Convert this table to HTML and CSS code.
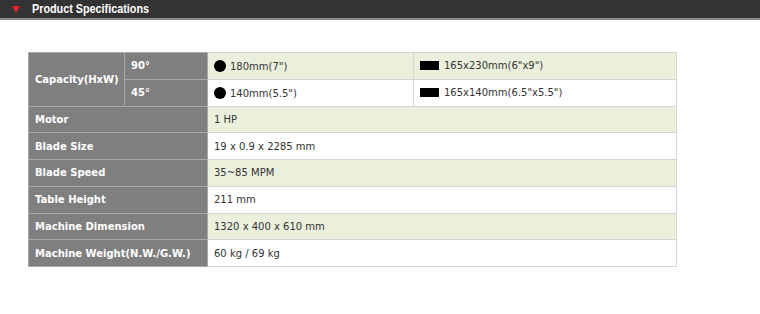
FILE: index.html
```html
<!DOCTYPE html>
<html>
<head>
<meta charset="utf-8">
<link rel="stylesheet" href="styles.css">
</head>
<body>
<div class="bar">
  <span class="tri"></span>
  <span class="bar-title">Product Specifications</span>
</div>
<div class="content">
<table class="spec">
  <colgroup>
    <col class="c1"><col class="c2"><col class="c3"><col class="c4">
  </colgroup>
  <tr class="alt">
    <th rowspan="2">Capacity(HxW)</th>
    <th>90°</th>
    <td><span class="dot"></span>180mm(7")</td>
    <td><span class="rect"></span>165x230mm(6"x9")</td>
  </tr>
  <tr>
    <th>45°</th>
    <td><span class="dot"></span>140mm(5.5")</td>
    <td><span class="rect"></span>165x140mm(6.5"x5.5")</td>
  </tr>
  <tr class="alt"><th colspan="2">Motor</th><td colspan="2">1 HP</td></tr>
  <tr><th colspan="2">Blade Size</th><td colspan="2">19 x 0.9 x 2285 mm</td></tr>
  <tr class="alt"><th colspan="2">Blade Speed</th><td colspan="2">35~85 MPM</td></tr>
  <tr><th colspan="2">Table Height</th><td colspan="2">211 mm</td></tr>
  <tr class="alt"><th colspan="2">Machine Dimension</th><td colspan="2">1320 x 400 x 610 mm</td></tr>
  <tr><th colspan="2">Machine Weight(N.W./G.W.)</th><td colspan="2">60 kg / 69 kg</td></tr>
</table>
</div>
</body>
</html>
```
FILE: styles.css
```css
html, body { margin: 0; padding: 0; background: #fff; }
.bar {
  height: 18px;
  background: #333333;
  border-bottom: 2px solid #8c8c8c;
  display: flex;
  align-items: center;
}
.tri {
  width: 0; height: 0;
  margin-left: 12px;
  border-left: 4px solid transparent;
  border-right: 4px solid transparent;
  border-top: 7px solid #e3262b;
}
.bar-title {
  margin-left: 12px;
  color: #fff;
  font-family: "Liberation Sans", Arial, sans-serif;
  font-weight: bold;
  font-size: 12px;
  transform: scaleX(0.9);
  transform-origin: left center;
}
.content { padding: 32px 0 0 28px; }
.spec {
  border-collapse: collapse;
  width: 648px;
  table-layout: fixed;
  font-family: "DejaVu Sans", Verdana, sans-serif;
  font-size: 10px;
}
.c1 { width: 96px; }
.c2 { width: 83px; }
.c3 { width: 206px; }
.c4 { width: 263px; }
.spec th, .spec td {
  height: 26.75px;
  padding: 0 6px;
  border: 1px solid #d6d6d6;
  text-align: left;
  white-space: nowrap;
  box-sizing: border-box;
}
.spec th {
  background: #7f7f7f;
  color: #fff;
  font-weight: bold;
  font-size: 10px;
  border-color: #a8a8a8;
}
.spec td { color: #333; background: #fff; }
.spec tr.alt td { background: #ebf0dd; }
.dot {
  display: inline-block;
  width: 12px; height: 12px;
  border-radius: 50%;
  background: #000;
  vertical-align: -2px;
  margin-right: 4px;
}
.rect {
  display: inline-block;
  width: 19px; height: 9px;
  background: #000;
  vertical-align: -1px;
  margin-right: 5px;
}
```
